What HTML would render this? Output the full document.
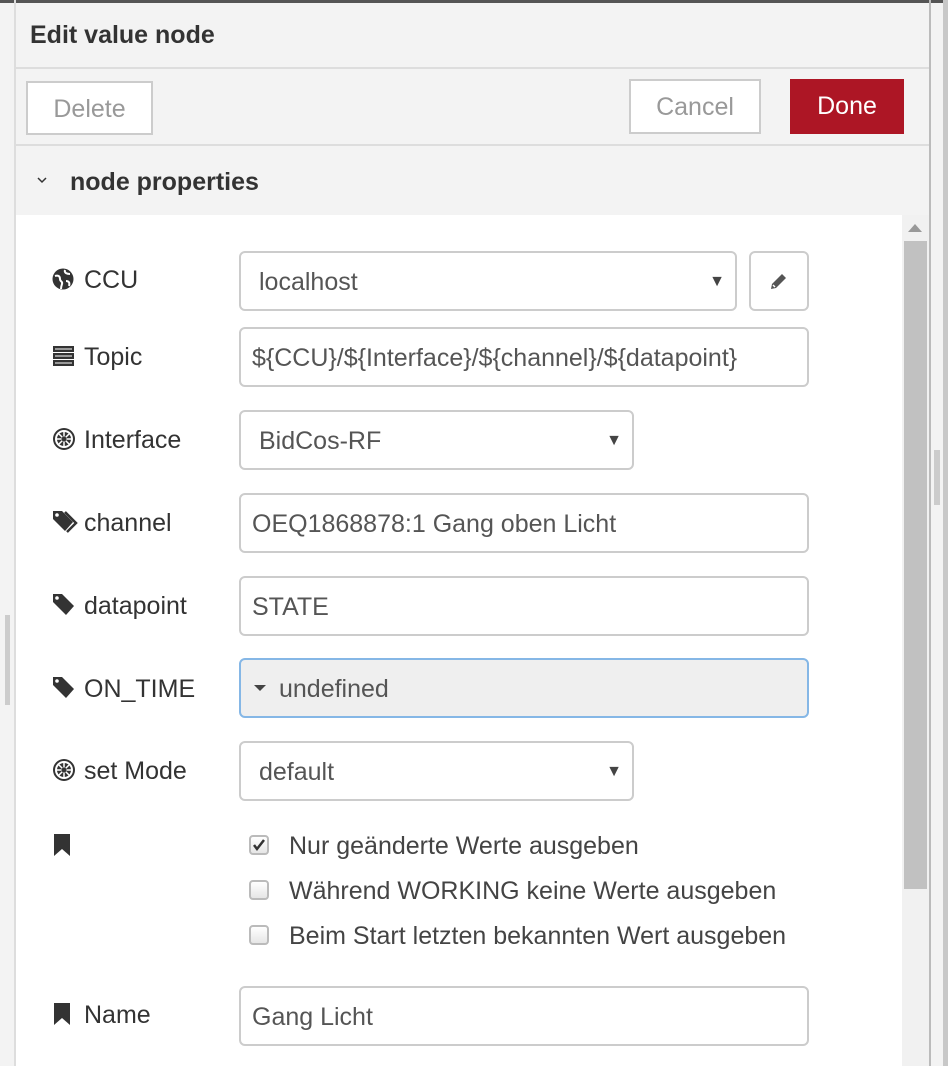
<!DOCTYPE html>
<html><head><meta charset="utf-8"><style>
*{box-sizing:border-box}
body{margin:0;width:948px;height:1066px;overflow:hidden;background:#f3f3f3;font-family:"Liberation Sans",sans-serif;color:#333;position:relative}
.a{position:absolute}
.inp{position:absolute;left:239px;width:570px;height:60px;border:2px solid #ccc;border-radius:6px;background:#fff;font-size:25px;color:#555;padding-left:11px;line-height:58px}
.sel{padding-left:18px}
.arr{position:absolute;right:10px;top:0;font-size:16px;color:#444}
.lab{position:absolute;left:84px;font-size:25px;color:#333}
.ic{position:absolute;left:52px}
.cb{position:absolute;left:249px;width:20px;height:20px;border:2px solid #bbb;border-radius:4px;background:linear-gradient(#fff,#e6e6e6)}
.ct{position:absolute;left:289px;font-size:25px;color:#444}
.btn{position:absolute;border:2px solid #ccc;background:#fff;color:#999;font-size:25px;text-align:center}
</style></head><body>
<div class="a" style="left:0;top:0;width:948px;height:3px;background:#555"></div>
<div class="a" style="left:14px;top:0;width:2px;height:1066px;background:#ddd"></div>
<div class="a" style="left:5px;top:615px;width:5px;height:90px;background:#ccc"></div>
<div class="a" style="left:929px;top:0;width:2px;height:1066px;background:#bbb"></div>
<div class="a" style="left:943px;top:0;width:5px;height:1066px;background:#c8c8c8"></div>
<div class="a" style="left:934px;top:450px;width:6px;height:55px;background:#ccc"></div>
<div class="a" style="left:30px;top:21px;font-size:25px;font-weight:bold;color:#333">Edit value node</div>
<div class="a" style="left:16px;top:67px;width:913px;height:2px;background:#ddd"></div>
<div class="btn" style="left:26px;top:81px;width:127px;height:54px;line-height:52px">Delete</div>
<div class="btn" style="left:629px;top:79px;width:132px;height:55px;line-height:52px">Cancel</div>
<div class="btn" style="left:790px;top:79px;width:114px;height:55px;line-height:55px;background:#ad1625;border:none;color:#fff">Done</div>
<div class="a" style="left:16px;top:144px;width:913px;height:2px;background:#ddd"></div>
<svg class="a" style="left:36px;top:176px" width="12" height="8" viewBox="0 0 12 8"><path d="M2 2l4 4 4-4" stroke="#333" stroke-width="1.5" fill="none"/></svg>
<div class="a" style="left:70px;top:168px;font-size:25px;font-weight:bold;color:#333">node properties</div>
<div class="a" style="left:16px;top:215px;width:886px;height:851px;background:#fff"></div>
<div class="a" style="left:902px;top:215px;width:27px;height:851px;background:#f1f1f1"></div>
<div class="a" style="left:908px;top:224px;width:0;height:0;border-left:7px solid transparent;border-right:7px solid transparent;border-bottom:8px solid #999"></div>
<div class="a" style="left:904px;top:241px;width:23px;height:648px;background:#c1c1c1"></div>

<svg class="ic" style="top:268px" width="22" height="22" viewBox="0 0 22 22"><circle cx="11" cy="11" r="10.5" fill="#333"/><path d="M3 8c3-1 5 0 5 3s3 2 2 5-1 4-1 5M13 2c-1 3 2 4 5 4M14 13c3 0 4 2 3 5" stroke="#fff" stroke-width="2" fill="none"/></svg>
<div class="lab" style="top:266px">CCU</div>
<div class="inp sel" style="top:251px;width:498px">localhost<span class="arr">▼</span></div>
<div class="inp" style="left:749px;top:251px;width:60px;padding:0"><svg style="position:absolute;left:18px;top:18px" width="20" height="20" viewBox="0 0 20 20"><path d="M2 18l1-5 10-10 4 4-10 10z" fill="#555"/><path d="M4 14l2 2" stroke="#fff" stroke-width="1.5"/></svg></div>

<svg class="ic" style="top:345px" width="23" height="22" viewBox="0 0 23 22"><rect x="1" y="1" width="21" height="6" fill="#333"/><rect x="1" y="8" width="21" height="6" fill="#333"/><rect x="1" y="15" width="21" height="6" fill="#333"/><path d="M3 4h17M3 11h17M3 18h17" stroke="#fff" stroke-width="1"/></svg>
<div class="lab" style="top:343px">Topic</div>
<div class="inp" style="top:327px">${CCU}/${Interface}/${channel}/${datapoint}</div>

<svg class="ic" style="top:427px" width="24" height="24" viewBox="0 0 24 24"><circle cx="12" cy="12" r="11" fill="#333"/><circle cx="12" cy="12" r="9" fill="#fff"/><circle cx="12" cy="12" r="7" fill="#333"/><path d="M12 5v14M5 12h14M7 7l10 10M17 7L7 17" stroke="#fff" stroke-width="1.5"/><circle cx="12" cy="12" r="2.5" fill="#333"/></svg>
<div class="lab" style="top:426px">Interface</div>
<div class="inp sel" style="top:410px;width:395px">BidCos-RF<span class="arr">▼</span></div>

<svg class="ic" style="top:510px" width="26" height="24" viewBox="0 0 26 24"><path d="M1 1h9l11 11-8 9L1 9z" fill="#333"/><path d="M13 2l11 11-9 9" stroke="#333" stroke-width="2.5" fill="none"/><circle cx="5" cy="5" r="1.8" fill="#fff"/></svg>
<div class="lab" style="top:509px">channel</div>
<div class="inp" style="top:493px">OEQ1868878:1 Gang oben Licht</div>

<svg class="ic" style="top:593px" width="23" height="23" viewBox="0 0 23 23"><path d="M1 1h9l12 12-8 9L1 9z" fill="#333"/><circle cx="5" cy="5" r="1.8" fill="#fff"/></svg>
<div class="lab" style="top:592px">datapoint</div>
<div class="inp" style="top:576px">STATE</div>

<svg class="ic" style="top:676px" width="23" height="23" viewBox="0 0 23 23"><path d="M1 1h9l12 12-8 9L1 9z" fill="#333"/><circle cx="5" cy="5" r="1.8" fill="#fff"/></svg>
<div class="lab" style="top:675px">ON_TIME</div>
<div class="inp" style="top:658px;border-color:#85b7e6;background:#efefef;padding-left:12px"><svg width="14" height="8" viewBox="0 0 14 8" style="margin-right:12px;vertical-align:middle;position:relative;top:-2px"><path d="M1 1h12L7 7z" fill="#444"/></svg>undefined</div>

<svg class="ic" style="top:758px" width="24" height="24" viewBox="0 0 24 24"><circle cx="12" cy="12" r="11" fill="#333"/><circle cx="12" cy="12" r="9" fill="#fff"/><circle cx="12" cy="12" r="7" fill="#333"/><path d="M12 5v14M5 12h14M7 7l10 10M17 7L7 17" stroke="#fff" stroke-width="1.5"/><circle cx="12" cy="12" r="2.5" fill="#333"/></svg>
<div class="lab" style="top:757px">set Mode</div>
<div class="inp sel" style="top:741px;width:395px">default<span class="arr">▼</span></div>

<svg class="ic" style="top:834px;left:53px" width="18" height="22" viewBox="0 0 18 22"><path d="M1 0h16v22l-8-7-8 7z" fill="#333"/></svg>
<div class="cb" style="top:835px"><svg width="16" height="16" viewBox="0 0 16 16" style="position:absolute;left:0;top:0"><path d="M3 8l3 4 7-9" stroke="#333" stroke-width="2.5" fill="none"/></svg></div>
<div class="ct" style="top:832px">Nur geänderte Werte ausgeben</div>
<div class="cb" style="top:880px"></div>
<div class="ct" style="top:877px">Während WORKING keine Werte ausgeben</div>
<div class="cb" style="top:925px"></div>
<div class="ct" style="top:922px">Beim Start letzten bekannten Wert ausgeben</div>

<svg class="ic" style="top:1003px;left:53px" width="18" height="22" viewBox="0 0 18 22"><path d="M1 0h16v22l-8-7-8 7z" fill="#333"/></svg>
<div class="lab" style="top:1001px">Name</div>
<div class="inp" style="top:986px">Gang Licht</div>
</body></html>
